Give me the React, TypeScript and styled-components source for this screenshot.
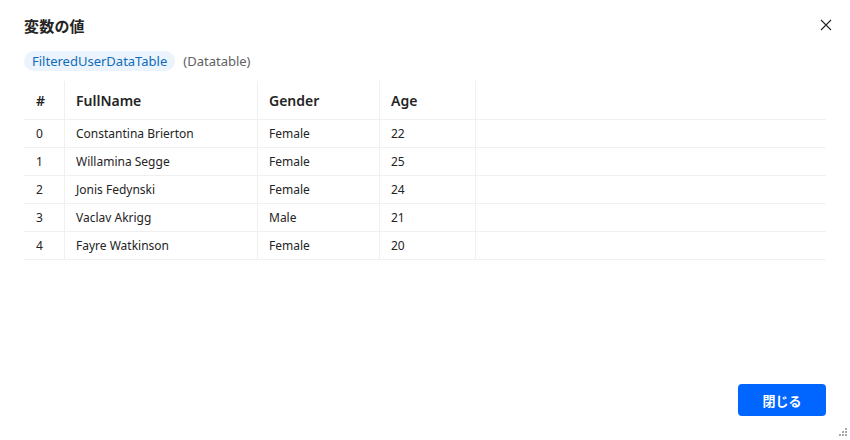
import React from "react";
import styled, { createGlobalStyle } from "styled-components";

const Global = createGlobalStyle`
  html, body { margin: 0; padding: 0; background: #ffffff; }
  body { font-family: "Segoe UI", "Noto Sans", "Noto Sans CJK JP", sans-serif; color: #242424; }
  * { box-sizing: border-box; }
`;

const Dialog = styled.div`
  position: relative;
  width: 850px;
  height: 440px;
  padding: 14px 24px 24px 24px;
  display: flex;
  flex-direction: column;
  background: #fff;
`;

const Header = styled.div`
  display: flex;
  align-items: center;
  justify-content: space-between;
  height: 22px;
`;

const Title = styled.h2`
  margin: 0;
  font-family: "Noto Sans CJK JP", sans-serif;
  font-size: 15px;
  font-weight: 700;
  color: #242424;
  letter-spacing: 0.2px;
`;

const CloseButton = styled.button`
  border: none;
  background: transparent;
  padding: 0;
  width: 16px;
  height: 16px;
  margin-right: -8px;
  display: flex;
  align-items: center;
  justify-content: center;
  cursor: pointer;
`;

const VarRow = styled.div`
  display: flex;
  align-items: center;
  gap: 8px;
  margin-top: 15px;
  height: 20px;
`;

const Pill = styled.span`
  background: #ebf3fc;
  color: #0f6cbd;
  border-radius: 10px;
  padding: 0 8px;
  height: 20px;
  line-height: 20px;
  font-size: 13px;
`;

const TypeLabel = styled.span`
  color: #616161;
  font-size: 13px;
`;

const Table = styled.div`
  margin-top: 10px;
  display: grid;
  grid-template-columns: 41px 193px 122px 96px 1fr;
`;

const HeadCell = styled.div<{ $last?: boolean; $first?: boolean }>`
  height: 39px;
  display: flex;
  align-items: center;
  padding-left: ${(p) => (p.$first ? "12px" : "11px")};
  font-size: 14px;
  font-weight: 600;
  color: #242424;
  border-bottom: 1px solid #f0f0f0;
  border-right: ${(p) => (p.$last ? "none" : "1px solid #f0f0f0")};
`;

const Cell = styled.div<{ $last?: boolean; $first?: boolean }>`
  height: 28px;
  display: flex;
  align-items: center;
  padding-left: ${(p) => (p.$first ? "12px" : "11px")};
  font-size: 12px;
  color: #242424;
  border-bottom: 1px solid #f0f0f0;
  border-right: ${(p) => (p.$last ? "none" : "1px solid #f0f0f0")};
`;

const Footer = styled.div`
  margin-top: auto;
  display: flex;
  justify-content: flex-end;
`;

const PrimaryButton = styled.button`
  width: 88px;
  height: 32px;
  border: none;
  border-radius: 4px;
  background: #0066ff;
  color: #fff;
  font-family: "Noto Sans CJK JP", sans-serif;
  font-size: 13px;
  font-weight: 700;
  cursor: pointer;
`;

const Grip = styled.svg`
  position: absolute;
  right: 3px;
  bottom: 3px;
`;

const rows = [
  ["0", "Constantina Brierton", "Female", "22"],
  ["1", "Willamina Segge", "Female", "25"],
  ["2", "Jonis Fedynski", "Female", "24"],
  ["3", "Vaclav Akrigg", "Male", "21"],
  ["4", "Fayre Watkinson", "Female", "20"],
];

export default function App() {
  return (
    <>
      <Global />
      <Dialog>
        <Header>
          <Title>変数の値</Title>
          <CloseButton aria-label="close">
            <svg width="12" height="12" viewBox="0 0 12 12">
              <path d="M1 1 L11 11 M11 1 L1 11" stroke="#242424" strokeWidth="1.1" />
            </svg>
          </CloseButton>
        </Header>
        <VarRow>
          <Pill>FilteredUserDataTable</Pill>
          <TypeLabel>(Datatable)</TypeLabel>
        </VarRow>
        <Table>
          <HeadCell $first>#</HeadCell>
          <HeadCell>FullName</HeadCell>
          <HeadCell>Gender</HeadCell>
          <HeadCell>Age</HeadCell>
          <HeadCell $last />
          {rows.map((r) => (
            <React.Fragment key={r[0]}>
              <Cell $first>{r[0]}</Cell>
              <Cell>{r[1]}</Cell>
              <Cell>{r[2]}</Cell>
              <Cell>{r[3]}</Cell>
              <Cell $last />
            </React.Fragment>
          ))}
        </Table>
        <Footer>
          <PrimaryButton>閉じる</PrimaryButton>
        </Footer>
        <Grip width="10" height="10" viewBox="0 0 10 10">
          {[
            [8, 0],
            [5, 3], [8, 3],
            [2, 6], [5, 6], [8, 6],
          ].map(([x, y], i) => (
            <rect key={i} x={x} y={y + 1} width="2" height="2" fill="#a8a8a8" />
          ))}
        </Grip>
      </Dialog>
    </>
  );
}
